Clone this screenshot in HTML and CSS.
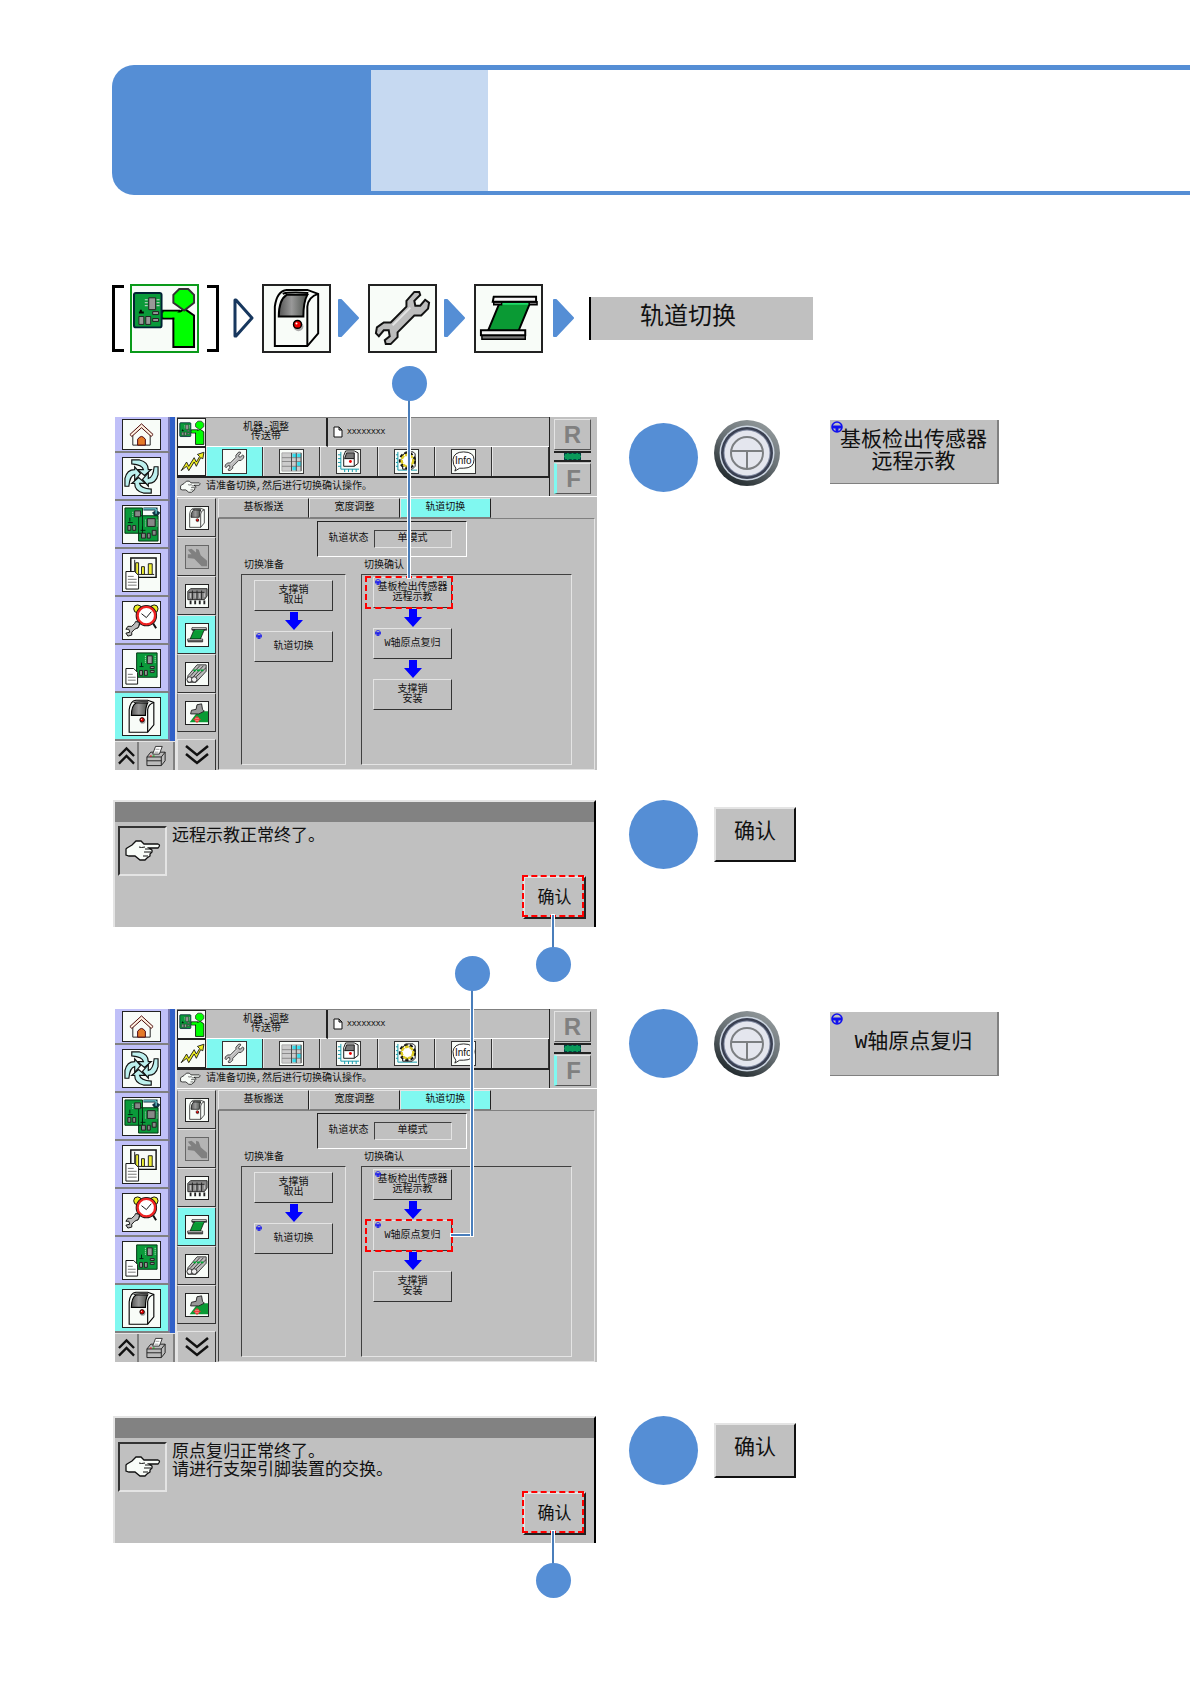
FILE: index.html
```html
<!DOCTYPE html>
<html lang="zh-CN">
<head>
<meta charset="utf-8">
<meta name="viewport" content="width=device-width, initial-scale=1">
<title>轨道切换</title>
<link rel="stylesheet" href="styles.css">
</head>
<body>
<svg class="sprite" aria-hidden="true">
  <defs>
    <linearGradient id="glass"><stop offset="0" stop-color="#555"/><stop offset=".45" stop-color="#999"/><stop offset="1" stop-color="#4a4f4a"/></linearGradient>
    <linearGradient id="rim" x1=".9" y1="0" x2=".3" y2="1"><stop offset="0" stop-color="#99a0a2"/><stop offset=".5" stop-color="#6a7276"/><stop offset="1" stop-color="#20282c"/></linearGradient>
  </defs>
  <symbol id="i-operator" viewBox="1 1 66 66">
    <path d="M32 26H49V34H32Z M54 24L64 31V63H43V33L46 30Z" fill="#0f0" stroke="#000" stroke-width="2"/>
    <path d="M32 28H52V33H32Z M44 33H60V60H47Z" fill="#0f0"/>
    <path d="M49 4H58L64 10V18L54 26L43 18V10Z" fill="#0f0" stroke="#333" stroke-width="2"/>
    <rect x="3" y="8" width="28" height="35" rx="2" fill="#0a9a3a" stroke="#023" stroke-width="2"/>
    <path d="M18 13h7v12h-7z M8 32h5v8h-5z M15 32h5v8h-5z M22 27h6v3h-6z M22 34h6v3h-6z" fill="#999" stroke="#222"/>
    <path d="M14 15h3M14 18h3M14 21h3M26 15h3M26 18h3M26 21h3" stroke="#ddd"/>
    <path d="M10 25v3M8 28h5" stroke="#000" stroke-width="2"/>
  </symbol>
  <symbol id="i-machine" viewBox="1 1 66 66">
    <path d="M12 62V22Q14 6 24 5H45L56 9V49L45 62Z" fill="#f8fcf8" stroke="#000" stroke-width="2"/>
    <path d="M45 62V22Q46 12 56 9M20 9Q24 7 46 8" fill="none" stroke="#000" stroke-width="2"/>
    <path d="M16 32Q16 15 24 10H45Q41 17 41 32Z" fill="url(#glass)" stroke="#000" stroke-width="2"/>
    <circle cx="36" cy="42" r="5" fill="#aaa"/><circle cx="35" cy="40" r="4" fill="#e00" stroke="#000" stroke-width="1.5"/><circle cx="34" cy="39" r="1" fill="#fff"/>
  </symbol>
  <symbol id="i-wrench" viewBox="1 1 66 66">
    <path d="M38 22V16L46 7H51L52 10L46 16L47 21H52L57 15L61 18L60 24L53 31H46L29 48V53L22 60H17L16 56L21 52L20 46H15L10 52L7 49L8 43L15 38H22Z" fill="#bcbcbc" stroke="#111" stroke-width="2"/>
    <path d="M24 41L42 23" stroke="#e4e4e4" stroke-width="2"/>
  </symbol>
  <symbol id="i-rail" viewBox="1 1 66 66">
    <path d="M25 18H56L44 47H13Z" fill="#0a9a34" stroke="#000" stroke-width="2"/>
    <path d="M26 19H55" stroke="#1fdc6a" stroke-width="2"/>
    <path d="M19 17h8v3h-8zM55 17h8v3h-8zM7 51h44v4H7z" fill="#777" stroke="#000" stroke-width="1.5"/>
    <path d="M19 12H62V17H18ZM6 46H51V51H6Z" fill="#f4f4f4" stroke="#000" stroke-width="2"/>
  </symbol>
  <symbol id="i-home" viewBox="0 0 38 30">
    <path d="M10 14V26H28V14L19 6Z" fill="#f8fcf8" stroke="#222"/>
    <path d="M7 15L19 4L31 15L29 17L19 8L9 17Z" fill="#fff0e0" stroke="#400"/>
    <path d="M15 26V20Q19 14 23 20V26Z" fill="#e47a28" stroke="#401"/>
  </symbol>
  <symbol id="i-cycle" viewBox="0 0 38 38">
    <g fill="#bdf0ee" stroke="#111" stroke-width="1.2">
      <path d="M9 2H17Q26 4 26 12H29L22 18L15 12H21Q20 7 9 6Z"/>
      <path d="M36 9V17Q34 26 26 26V29L20 22L26 15V21Q31 20 32 9Z"/>
      <path d="M29 36H21Q12 34 12 26H9L16 20L23 26H17Q18 31 29 32Z"/>
      <path d="M2 29V21Q4 12 12 12V9L18 16L12 23V17Q7 18 6 29Z"/>
    </g>
  </symbol>
  <symbol id="i-boards" viewBox="0 0 38 38">
    <path d="M21 3H34V8M31 6l3 4 3-4" fill="none" stroke="#134" stroke-width="3"/><path d="M21 3H34V8" fill="none" stroke="#8ff"/>
    <path d="M2 2H20V28H2Z M16 10H36V36H16Z" fill="#0a9a3a" stroke="#031"/>
    <path d="M12 5h6v6h-6z M5 20h3v5h-3z M10 20h3v5h-3z M25 13h8v8h-8z M19 28h4v5h-4z M25 28h3v5h-3z M30 25h4v5h-4z" fill="#888" stroke="#222"/>
    <path d="M7 12v4M5 17h5M20 21v4M18 25h5" stroke="#021"/><path d="M10 6v5M23 14v7M35 14v7" stroke="#ccc" stroke-dasharray="1 1"/>
  </symbol>
  <symbol id="i-report" viewBox="0 0 38 38">
    <path d="M8 4H34V24H8Z" fill="#f8fcf8" stroke="#111" stroke-width="1.5"/><path d="M12 6V21H32" stroke="#222" fill="none"/>
    <path d="M13 9h3v12h-3zM19 13h3v8h-3zM26 10h4v11h-4z" fill="#ee3" stroke="#222"/>
    <path d="M3 18H12L16 22V36H3Z" fill="#fff" stroke="#111"/><path d="M5 23h6M5 26h9M5 29h9M5 32h9" stroke="#777"/>
  </symbol>
  <symbol id="i-clock" viewBox="0 0 38 38">
    <circle cx="15" cy="7" r="4" fill="#ee2" stroke="#111"/><circle cx="32" cy="7" r="4" fill="#ee2" stroke="#111"/>
    <path d="M17 22l-3 5M31 22l3 5" stroke="#111" stroke-width="2"/>
    <circle cx="24" cy="14" r="9" fill="#fff" stroke="#111" stroke-width="4"/><circle cx="24" cy="14" r="9" fill="#fff" stroke="#e22" stroke-width="2.5"/>
    <path d="M19 12l5 4 5-6" fill="none" stroke="#111"/>
    <path d="M13 20l4 1-1 5-4 2-3 3 0 3-4 1-2-3 4-1-1-3-3 0 2-3h4l3-3Z" fill="#bbb" stroke="#111"/>
  </symbol>
  <symbol id="i-boarddoc" viewBox="0 0 38 38">
    <path d="M14 3H35V28H14Z" fill="#0a9a3a" stroke="#031"/>
    <path d="M25 6h5v8h-5z M17 21h3v5h-3z M22 21h3v5h-3z M28 17h4v2h-4zM28 21h4v2h-4z" fill="#999" stroke="#222"/>
    <path d="M23 6v8M33 6v8" stroke="#dfd" stroke-dasharray="1 1"/><path d="M19 13v4M17 17h4" stroke="#021"/>
    <path d="M3 19H11L15 23V35H3Z" fill="#fff" stroke="#111"/><path d="M5 25h5M5 28h8M5 31h8" stroke="#777"/>
  </symbol>
  <symbol id="i-printer" viewBox="0 0 24 24">
    <path d="M2 13L6 8H21V17L17 22H2Z" fill="#bbb" stroke="#222"/><path d="M2 13H17L21 8M17 13V22M2 17H17" fill="none" stroke="#222"/>
    <path d="M8 10L11 2H18L15 10Z" fill="#fff" stroke="#333"/><path d="M11 5h4M10 8h4" stroke="#999"/><path d="M5 12h2" stroke="#e00"/><path d="M8 12h2" stroke="#0a0"/>
  </symbol>
  <symbol id="i-up" viewBox="0 0 18 20"><path d="M1 10L9 2L17 10M1 18L9 10L17 18" fill="none" stroke="#111" stroke-width="2.5"/></symbol>
  <symbol id="i-down" viewBox="0 0 24 22"><path d="M1 2L12 11L23 2M1 10L12 19L23 10" fill="none" stroke="#111" stroke-width="2.5"/></symbol>
  <symbol id="i-off" viewBox="0 0 24 24"><path d="M2 4L6 3L11 7V3L14 4L16 10L23 16V22H17L9 14L2 13V9H6Z" fill="#808080"/></symbol>
  <symbol id="i-feeders" viewBox="0 0 24 24">
    <path d="M2 7L5 4H23V12L20 16H2Z" fill="#888" stroke="#222"/><path d="M7 6V16M12 6V16M17 6V16M3 8H20" stroke="#222"/><path d="M5 9v5M10 9v5M15 9v5M20 9v4" stroke="#ccc"/>
    <path d="M5 17v4M10 17v4M15 17v4M20 17v4" stroke="#222" stroke-width="2"/>
  </symbol>
  <symbol id="i-cables" viewBox="0 0 24 24">
    <path d="M2 14L12 2H22V9L11 21H2Z" fill="#bbb" stroke="#333"/><path d="M5 14L15 3M8 15L19 3M11 15L22 5" stroke="#333"/><path d="M8 8h12" stroke="#0a3" stroke-width="2" stroke-dasharray="3 1"/>
    <circle cx="4" cy="18" r="3" fill="#eee" stroke="#222"/><circle cx="9" cy="18" r="3" fill="#eee" stroke="#222"/>
  </symbol>
  <symbol id="i-nozzle" viewBox="0 0 24 24">
    <path d="M4 22L13 10H24V22Z" fill="#0a9a34"/><path d="M12 3L17 2L18 8L20 10L14 13H5L6 9L11 8Z" fill="#999" stroke="#222"/>
    <circle cx="12" cy="19" r="2.5" fill="#fbb" stroke="#e33"/><path d="M12 15v8M8 19h8" stroke="#e33"/>
  </symbol>
  <symbol id="i-trend" viewBox="0 0 24 24"><path d="M2 20L7 12L9 16L14 8L16 12L19 7L17 5L23 3L22 9L20 8L16 16L14 12L9 20L7 16Z" fill="#ee2" stroke="#111" stroke-width=".8"/></symbol>
  <symbol id="i-grid" viewBox="0 0 24 24">
    <path d="M2 3H22V22H2Z" fill="#ccc" stroke="#aaa"/><path d="M13 4h4v4h-4zM18 12h4v5h-4zM13 17h4v4h-4zM18 4h4v4h-4z" fill="#3de"/><path d="M2 8H22M2 12H22M2 17H22" stroke="#888"/><path d="M12 3V22M17 3V22M22 3V22" stroke="#444"/>
  </symbol>
  <symbol id="i-axis" viewBox="0 0 24 24">
    <path d="M4 2V20H23M1 5h3M1 9h3M1 13h3M1 17h3M8 20v3M12 20v3M16 20v3M20 20v3" fill="none" stroke="#19a"/>
    <path d="M7 17V6L9 1H18L22 3V14L18 17Z" fill="#fff" stroke="#111"/><path d="M8 9L10 3H18V9Z" fill="#777" stroke="#111"/><path d="M18 9V17" stroke="#111"/><circle cx="14" cy="12" r="1.500" fill="#e00"/>
  </symbol>
  <symbol id="i-gear" viewBox="0 0 24 24">
    <path d="M3 2V21H23M1 5h2M1 9h2M1 13h2M1 17h2" fill="none" stroke="#19a"/><path d="M8 20V6L11 2H19L21 4V17L18 20Z" fill="#fff" stroke="#111"/>
    <circle cx="13" cy="11" r="7" fill="none" stroke="#111" stroke-width="4" stroke-dasharray="3 2"/><circle cx="13" cy="11" r="6" fill="#fff" stroke="#dc2" stroke-width="2.500" stroke-dasharray="4 1"/>
  </symbol>
  <symbol id="i-bubble" viewBox="0 0 24 24"><path d="M4 19Q1 16 1 10Q2 2 12 2Q23 2 23 10Q23 19 12 19H8L3 22Z" fill="#fff" stroke="#222"/></symbol>
  <symbol id="i-doc" viewBox="0 0 10 12"><path d="M1 1H6L9 4V11H1Z M6 1V4H9" fill="#fff" stroke="#111"/></symbol>
  <symbol id="i-hand" viewBox="0 0 36 24">
    <path d="M2 9L7 6L11 2H16L19 5H33Q36 6 33 9H24L27 11V13L25 15V17L22 19L20 21H15L10 17H4L1 16V10Z" fill="#f8fcf8" stroke="#111" stroke-width="1.3"/>
    <path d="M14 8Q16 9 20 8M20 10h6M19 13h7M18 17h5" fill="none" stroke="#111"/>
  </symbol>
  <symbol id="i-wheel" viewBox="0 0 12 12"><circle cx="6" cy="6" r="5" fill="#c0c0c0" stroke="#11e" stroke-width="1.6"/><path d="M1 6H11M6 6V11" stroke="#11e" stroke-width="3"/></symbol>
  <symbol id="i-knob" viewBox="0 0 66 66">
    <circle cx="33" cy="33" r="33" fill="url(#rim)"/><circle cx="33" cy="33" r="27.500" fill="#cdd6e2"/><circle cx="33" cy="33" r="26" fill="#3a4052"/><circle cx="33" cy="33" r="23.500" fill="#8089a0"/><circle cx="33" cy="33" r="22.500" fill="#e4e6ee"/>
    <path d="M17 33A16 16 0 1 1 49 33A16 16 0 1 1 17 33ZM17 31H49M33 31V49" fill="none" stroke="#7c7f82" stroke-width="2"/>
  </symbol>
  <symbol id="i-arrow" viewBox="0 0 18 18"><path d="M5 0H13V8H18L9 18L0 8H5Z" fill="#00f"/></symbol>
  <symbol id="i-next" viewBox="0 0 22 40"><path d="M2 2H4L21 20L4 38H2Z" fill="#558ed5" stroke="#558ed5" stroke-width="2" stroke-linejoin="round"/></symbol>
</svg>

<header class="banner"><div class="banner-dark"></div><div class="banner-rest"><div class="banner-light"></div></div></header>

<main>
  <nav class="trail" aria-label="操作路径">
    <span class="bracket"></span>
    <button class="tile tile-green" aria-label="操作"><svg><use href="#i-operator"/></svg></button>
    <span class="bracket bracket-right"></span>
    <svg class="next next-first" viewBox="0 0 22 40"><path d="M3 2H4L20 20L4 38H3Z" fill="#fff" stroke="#17375e" stroke-width="3" stroke-linejoin="round"/></svg>
    <button class="tile" aria-label="机器"><svg><use href="#i-machine"/></svg></button>
    <svg class="next"><use href="#i-next"/></svg>
    <button class="tile" aria-label="调整"><svg><use href="#i-wrench"/></svg></button>
    <svg class="next"><use href="#i-next"/></svg>
    <button class="tile" aria-label="传送带"><svg><use href="#i-rail"/></svg></button>
    <svg class="next next-last"><use href="#i-next"/></svg>
    <button class="trail-label">轨道切换</button>
  </nav>

  <section class="step step-first">
    <div class="screen" data-mark="sensor"></div>
    <div class="action">
      <span class="number"></span>
      <svg class="knob"><use href="#i-knob"/></svg>
      <button class="sample"><svg class="wheel"><use href="#i-wheel"/></svg>基板检出传感器<br>远程示教</button>
    </div>
  </section>

  <section class="step step-dialog">
    <div class="dialog">
      <div class="dialog-bar"></div>
      <div class="dialog-body">
        <span class="dialog-icon"><svg><use href="#i-hand"/></svg></span>
        <p>远程示教正常终了。</p>
        <button class="ok">确认<span class="mark mark-below"><i class="lead"></i><i class="dot"></i></span></button>
      </div>
    </div>
    <div class="action">
      <span class="number"></span>
      <button class="sample sample-ok">确认</button>
    </div>
  </section>

  <section class="step step-second">
    <div class="screen" data-mark="origin"></div>
    <div class="action">
      <span class="number"></span>
      <svg class="knob"><use href="#i-knob"/></svg>
      <button class="sample"><svg class="wheel"><use href="#i-wheel"/></svg>W轴原点复归</button>
    </div>
  </section>

  <section class="step step-last">
    <div class="dialog">
      <div class="dialog-bar"></div>
      <div class="dialog-body">
        <span class="dialog-icon"><svg><use href="#i-hand"/></svg></span>
        <p>原点复归正常终了。<br>请进行支架引脚装置的交换。</p>
        <button class="ok">确认<span class="mark mark-below"><i class="lead"></i><i class="dot"></i></span></button>
      </div>
    </div>
    <div class="action">
      <span class="number"></span>
      <button class="sample sample-ok">确认</button>
    </div>
  </section>
</main>

<template id="screen">
  <div class="side">
    <button class="side-item side-home" aria-label="主页"><svg><use href="#i-home"/></svg></button>
    <button class="side-item" aria-label="循环"><svg><use href="#i-cycle"/></svg></button>
    <button class="side-item" aria-label="基板切换"><svg><use href="#i-boards"/></svg></button>
    <button class="side-item" aria-label="报告"><svg><use href="#i-report"/></svg></button>
    <button class="side-item" aria-label="维护"><svg><use href="#i-clock"/></svg></button>
    <button class="side-item" aria-label="基板数据"><svg><use href="#i-boarddoc"/></svg></button>
    <button class="side-item active" aria-label="机器"><svg><use href="#i-machine"/></svg></button>
    <div class="side-foot">
      <button class="foot-up" aria-label="上一页"><svg><use href="#i-up"/></svg></button>
      <button class="foot-print" aria-label="打印"><svg><use href="#i-printer"/></svg></button>
    </div>
  </div>
  <div class="pane">
    <div class="top">
      <div class="top-main">
        <div class="title-row">
          <button class="corner" aria-label="操作"><svg><use href="#i-operator"/></svg></button>
          <div class="title">机器-调整<br>传送带</div>
          <div class="file"><svg><use href="#i-doc"/></svg>XXXXXXXX</div>
        </div>
        <div class="tool-row">
          <button class="corner" aria-label="趋势"><svg><use href="#i-trend"/></svg></button>
          <button class="tool active" aria-label="调整"><svg><use href="#i-wrench"/></svg></button>
          <button class="tool" aria-label="表格"><svg><use href="#i-grid"/></svg></button>
          <button class="tool" aria-label="坐标"><svg><use href="#i-axis"/></svg></button>
          <button class="tool" aria-label="设定"><svg><use href="#i-gear"/></svg></button>
          <button class="tool tool-info"><svg><use href="#i-bubble"/></svg><span>Info</span></button>
          <span class="tool"></span>
        </div>
        <div class="message"><svg><use href="#i-hand"/></svg>请准备切换,然后进行切换确认操作。</div>
      </div>
      <div class="rf">
        <button>R</button>
        <div class="rf-bar"><span></span></div>
        <button class="rf-on">F</button>
      </div>
    </div>
    <div class="body">
      <div class="sub">
        <button aria-label="机器"><svg><use href="#i-machine"/></svg></button>
        <button aria-label="停用"><svg class="muted"><use href="#i-off"/></svg></button>
        <button aria-label="供料器"><svg><use href="#i-feeders"/></svg></button>
        <button class="active" aria-label="传送带"><svg><use href="#i-rail"/></svg></button>
        <button aria-label="料带"><svg><use href="#i-cables"/></svg></button>
        <button aria-label="吸嘴"><svg><use href="#i-nozzle"/></svg></button>
        <button class="sub-down" aria-label="下一页"><svg><use href="#i-down"/></svg></button>
      </div>
      <div class="content">
        <div class="tabs"><button>基板搬送</button><button>宽度调整</button><button class="active">轨道切换</button></div>
        <div class="panel">
          <div class="status"><span>轨道状态</span><output>单模式</output></div>
          <div class="groups">
            <div class="group">
              <h3>切换准备</h3>
              <div class="flow flow-prepare">
                <button class="op">支撑销<br>取出</button>
                <svg class="arrow"><use href="#i-arrow"/></svg>
                <button class="op"><svg class="wheel"><use href="#i-wheel"/></svg>轨道切换</button>
              </div>
            </div>
            <div class="group group-wide">
              <h3>切换确认</h3>
              <div class="flow">
                <button class="op" data-op="sensor"><svg class="wheel"><use href="#i-wheel"/></svg>基板检出传感器<br>远程示教</button>
                <svg class="arrow"><use href="#i-arrow"/></svg>
                <button class="op" data-op="origin"><svg class="wheel"><use href="#i-wheel"/></svg>W轴原点复归</button>
                <svg class="arrow"><use href="#i-arrow"/></svg>
                <button class="op">支撑销<br>安装</button>
              </div>
            </div>
          </div>
        </div>
      </div>
    </div>
  </div>
</template>
<script src="script.js"></script>
</body>
</html>
```

FILE: script.js
```js
// Both machine screens share one template; only the marked button differs.
const template = document.getElementById('screen');
const leads = {
  sensor: '<i class="lead"></i><i class="dot"></i>',
  origin: '<i class="lead-side"></i><i class="lead"></i><i class="dot"></i>'
};

document.querySelectorAll('.screen').forEach((screen) => {
  screen.append(template.content.cloneNode(true));
  const name = screen.dataset.mark;
  const mark = document.createElement('span');
  mark.className = 'mark mark-op mark-' + name;
  mark.innerHTML = leads[name];
  screen.querySelector('[data-op="' + name + '"]').append(mark);
});
```

FILE: styles.css
```css
* { box-sizing: border-box; }

:root {
  --blue: #558ed5;
  --gray: #c0c0c0;
  --cyan: #80f8f0;
  --dark: #404040;
  --mid: #808080;
  --light: #e4e4e4;
}

body {
  margin: 0;
  background: #fff;
  color: #111;
  font-family: "Liberation Mono", "Noto Sans CJK SC", sans-serif;
}

button {
  margin: 0;
  padding: 0;
  border: 0;
  border-radius: 0;
  background: var(--gray);
  color: inherit;
  font: inherit;
}

svg { display: block; flex: none; }
.sprite { position: absolute; width: 0; height: 0; }

/* Banner */
.banner { display: flex; height: 130px; margin: 65px 0 0 112px; }
.banner-dark { width: 24%; border-radius: 22px 0 0 22px; background: var(--blue); }
.banner-rest { flex: 1; border: solid var(--blue); border-width: 5px 0 4px; }
.banner-light { width: 117px; height: 100%; background: #c6d9f1; }

main { padding: 88px 0 84px 115px; }

/* Trail */
.trail { display: flex; align-items: center; height: 70px; margin-left: -1px; }
.bracket { width: 12px; height: 67px; border: 3px solid #000; border-right: 0; margin-right: 6px; margin-left: -2px; }
.bracket-right { border: 3px solid #000; border-left: 0; margin: 0 0 0 8px; }
.tile { width: 69px; height: 69px; border: 2px solid #222; background: #f8fcf8; flex: none; }
.tile svg { width: 65px; height: 65px; }
.tile-green { border-color: #0a9a1a; }
.next { width: 22px; height: 40px; margin: 0 9px 0 6px; }
.next-first { margin-left: 13px; margin-right: 8px; }
.next-last { margin-left: 9px; }
.trail-label {
  width: 224px;
  height: 43px;
  margin-left: 6px;
  padding: 0 28px 0 0;
  border-left: 2px solid #000;
  font-size: 24px;
  line-height: 42px;
  text-align: center;
}

/* Steps */
.step {
  display: grid;
  grid-template-columns: 482fr 561fr;
  gap: 32px;
  align-items: start;
  margin-top: 64px;
}
.step-dialog { margin-top: 30px; }
.step-second { margin-top: 82px; }
.step-last { margin-top: 54px; }
.action { display: flex; align-items: center; min-height: 69px; }
.step-first .action { align-items: flex-start; padding-top: 3px; }
.step-first .number { margin-top: 3px; }
.number { width: 69px; height: 69px; border-radius: 50%; background: var(--blue); flex: none; }
.knob { width: 66px; height: 66px; margin: 0 50px 0 16px; }
.sample {
  position: relative;
  width: 169px;
  height: 64px;
  border-right: 2px solid var(--mid);
  border-bottom: 1px solid var(--mid);
  font-size: 21px;
  line-height: 22px;
  white-space: nowrap;
}
.sample-ok {
  width: 82px;
  height: 55px;
  margin-left: 16px;
  padding-bottom: 4px;
  border: 2px solid;
  border-color: var(--light) #111 #111 var(--light);
}
.wheel { position: absolute; top: 1px; left: 1px; width: 12px; height: 12px; }

/* Dialog */
.dialog {
  display: flex;
  flex-direction: column;
  min-height: 127px;
  margin: 0 1px 0 -2px;
  background: var(--gray);
  border: 2px solid var(--light);
  border-right-color: #000;
  border-bottom: 0;
}
.dialog-bar { height: 20px; background: #828282; }
.dialog-body { display: flex; flex: 1; padding: 4px 8px 8px 3px; }
.dialog-icon {
  display: flex;
  align-items: center;
  justify-content: center;
  width: 49px;
  height: 50px;
  border: 2px solid;
  border-color: #333 var(--light) var(--light) #333;
  flex: none;
}
.dialog-icon svg { width: 36px; height: 24px; }
.dialog p { flex: 1; margin: 2px 0 0 5px; font-size: 17px; line-height: 18px; }
.ok {
  position: relative;
  align-self: flex-end;
  width: 63px;
  height: 43px;
  padding-bottom: 5px;
  border: 2px solid;
  border-color: var(--light) #222 #222 var(--light);
  font-size: 17px;
}

/* Callouts */
.mark { position: absolute; inset: -3px 0 0 -3px; border: 2px dashed #f00; z-index: 2; }
.mark-op { inset: -2px -2px -2px -9px; }
.dot { position: absolute; width: 35px; height: 35px; border-radius: 50%; background: var(--blue); }
.lead { position: absolute; width: 2px; background: #4a7ebb; box-shadow: 0 0 0 1px #fff; }
.mark-below .lead { top: 100%; left: calc(50% - 1px); height: 33px; }
.mark-below .dot { top: calc(100% + 32px); left: calc(50% - 17px); }
.mark-sensor .lead { bottom: 100%; left: calc(50% - 1px); height: 178px; }
.mark-sensor .dot { bottom: calc(100% + 177px); left: calc(50% - 17px); }
.mark-origin .lead { bottom: 50%; left: calc(100% + 20px); height: 246px; }
.mark-origin .lead-side {
  position: absolute;
  left: 100%;
  bottom: 50%;
  width: 21px;
  height: 2px;
  background: #4a7ebb;
  box-shadow: 0 0 0 1px #fff;
}
.mark-origin .dot { bottom: calc(50% + 245px); left: calc(100% + 4px); }

/* Machine screen */
.screen { display: flex; min-height: 353px; background: var(--gray); font-size: 10px; line-height: 10px; }

.side { width: 60px; flex: none; display: flex; flex-direction: column; background: #3060c8; }
.side-item {
  display: flex;
  align-items: center;
  justify-content: center;
  width: 55px;
  height: 48px;
  background: #c0c0f8;
  border-bottom: 2px solid var(--mid);
  border-right: 2px solid #7878b0;
}
.side-home { height: 36px; }
.side-item svg { width: 39px; height: 39px; border: 1px solid #222; background: #f8fcf8; }
.side-home svg { height: 31px; }
.side-item.active { background: var(--cyan); }
.side-foot { display: flex; flex: 1; border-top: 1px solid var(--light); }
.foot-up, .foot-print { display: flex; align-items: center; justify-content: center; border-right: 2px solid var(--mid); }
.foot-up { width: 24px; }
.foot-up svg { width: 17px; height: 20px; }
.foot-print { flex: 1; }
.foot-print svg { width: 23px; height: 24px; }

.pane { flex: 1; min-width: 0; display: flex; flex-direction: column; border-left: 2px solid var(--light); }
.top { display: flex; border-bottom: 1px solid #fff; }
.top-main { flex: 1; min-width: 0; }
.title-row, .tool-row { display: flex; height: 30px; }
.title-row { border-top: 1px solid var(--mid); }
.tool-row { height: 31px; border-bottom: 2px solid #222; }
.corner { display: flex; align-items: center; justify-content: center; width: 29px; border: 1px solid #222; background: #f8fcf8; flex: none; }
.corner svg { width: 26px; height: 26px; }
.title { width: 122px; padding-top: 5px; border-right: 2px solid #222; border-bottom: 1px solid #fff; text-align: center; line-height: 9px; }
.file { display: flex; flex: 1; align-items: center; gap: 4px; padding-left: 5px; border-bottom: 1px solid #fff; font-size: 8px; }
.file svg { width: 10px; height: 12px; }
.tool { position: relative; display: flex; flex: 1; align-items: center; justify-content: center; border-right: 1px solid #333; border-left: 1px solid var(--light); }
.tool svg { width: 25px; height: 25px; border: 1px solid #333; background: #f8fcf8; }
.tool.active { background: var(--cyan); }
.tool-info span { position: absolute; inset: 9px 0 auto; font-family: "Liberation Sans", sans-serif; font-size: 10px; }
.message { display: flex; align-items: center; gap: 5px; height: 17px; padding-left: 3px; white-space: nowrap; }
.message svg { width: 21px; height: 14px; }

.rf { display: flex; flex-direction: column; width: 48px; padding: 2px 6px 2px 4px; border-left: 1px solid #222; }
.rf button { height: 31px; border: 1px solid; border-color: var(--light) #555 #555 var(--light); color: var(--mid); font-family: "Liberation Sans", sans-serif; font-size: 24px; font-weight: 700; line-height: 28px; }
.rf .rf-on { border-left: 3px solid var(--cyan); }
.rf-bar { display: flex; align-items: center; justify-content: center; height: 11px; margin: 1px 0; border-top: 2px solid #222; border-bottom: 2px solid #222; }
.rf-bar span { width: 17px; height: 7px; border: 1px dashed #044; background: #0a9a5a; }

.body { display: flex; flex: 1; padding-top: 1px; }
.sub { width: 39px; flex: none; display: flex; flex-direction: column; }
.sub button { display: flex; align-items: center; justify-content: center; height: 39px; border: 1px solid; border-color: var(--light) #333 #333 var(--mid); }
.sub button.active { background: var(--cyan); }
.sub svg { width: 24px; height: 24px; border: 1px solid #222; background: #f8fcf8; }
.sub svg.muted { border-color: #666; background: #b4b4b4; }
.sub .sub-down { flex: 1; margin-top: 7px; border-bottom: 0; border-left-color: var(--light); }
.sub .sub-down svg { height: 22px; border: 0; background: none; }
.content { display: flex; flex: 1; flex-direction: column; min-width: 0; margin-left: 2px; }
.tabs { display: flex; width: 72%; height: 20px; }
.tabs button { flex: 1; border: 1px solid; border-color: var(--light) #222 var(--mid) var(--light); }
.tabs .active { background: var(--cyan); }
.panel { flex: 1; margin-right: 2px; border: 1px solid; border-color: var(--mid) var(--light) var(--light) var(--dark); }
.status {
  display: flex;
  align-items: center;
  justify-content: space-between;
  width: 40%;
  height: 36px;
  margin: 2px 0 0 26%;
  padding: 0 14px 0 11px;
  border: 1px solid;
  border-color: #222 #fff #fff #222;
}
.status output { width: 78px; height: 18px; border: 1px solid; border-color: var(--dark) var(--light) var(--light) var(--dark); text-align: center; line-height: 16px; }
.groups { display: flex; gap: 15px; margin: 0 22px; }
.group { flex: 105; }
.group-wide { flex: 211; }
.group h3 { margin: 2px 0 0 3px; height: 15px; font: inherit; line-height: 14px; }
.flow { display: flex; flex-direction: column; align-items: center; width: 100%; height: 191px; padding-top: 2px; border: 1px solid; border-color: var(--dark) var(--light) var(--light) var(--dark); }
.flow-prepare { padding-top: 5px; }
.group-wide .flow { align-items: flex-start; padding-left: 11px; }
.group-wide .arrow { margin-left: 31px; }
.op { position: relative; width: 79px; height: 31px; border: 1px solid; border-color: var(--light) #333 #333 var(--light); flex: none; white-space: nowrap; }
.op .wheel { width: 6px; height: 6px; }
.arrow { width: 18px; height: 18px; margin: 1px 0; }
```
